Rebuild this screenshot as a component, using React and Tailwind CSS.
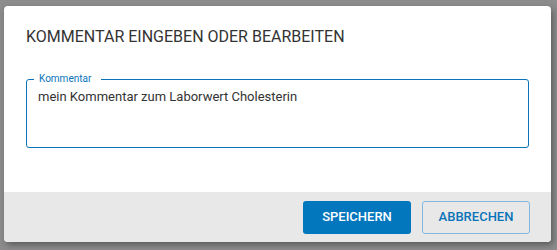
export default function App() {
    return (
        <div className="h-[250px] w-[557px] bg-[#8c8c8c] pl-[4px] pt-[6px]" style={{ fontFamily: 'Roboto, "Liberation Sans", sans-serif' }}>
            <div className="flex h-[236px] w-[547px] flex-col overflow-hidden rounded-[4px] bg-white shadow-[2px_3px_6px_rgba(0,0,0,0.35)]">
                <div className="flex-1 px-[22px] pt-[19px]">
                    <h2 className="text-[16px] leading-[24px] font-normal text-[#333]">KOMMENTAR EINGEBEN ODER BEARBEITEN</h2>

                    <div className="relative mt-[30px] h-[69px] rounded-[3px] border border-[#0a74ba] px-[11px] pt-[8px]">
                        <span className="absolute left-[7px] top-[-8px] bg-white pl-[5px] pr-[10px] text-[10px] leading-[14px] text-[#0a74ba]">Kommentar</span>
                        <p className="text-[13px] leading-[18px] text-[#333]">mein Kommentar zum Laborwert Cholesterin</p>
                    </div>
                </div>

                <div className="flex h-[50px] items-center justify-end gap-[11px] bg-[#e8e8e8] pr-[21px]">
                    <button className="h-[33px] w-[108px] rounded-[3px] bg-[#0277bd] text-[13px] font-medium text-white">SPEICHERN</button>
                    <button className="h-[33px] w-[108px] rounded-[3px] border border-[#82b8de] text-[13px] font-medium text-[#0a74ba]">ABBRECHEN</button>
                </div>
            </div>
        </div>
    );
}
